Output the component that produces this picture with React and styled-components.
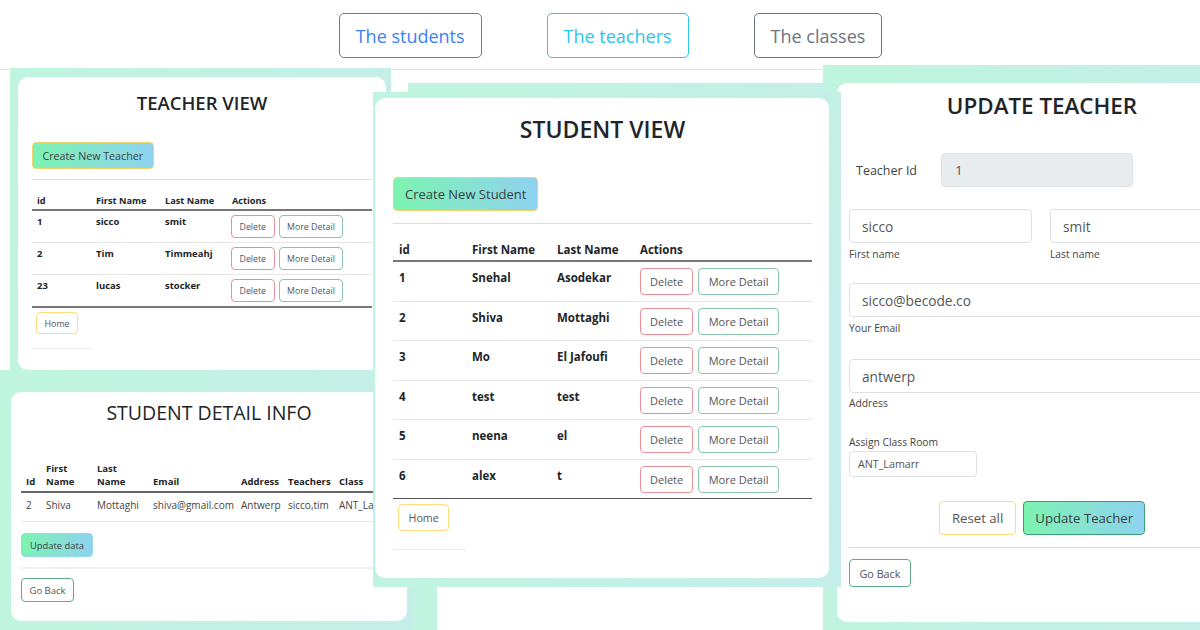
import React from 'react';
import styled, { createGlobalStyle } from 'styled-components';

const GlobalStyle = createGlobalStyle`
  html, body { margin: 0; padding: 0; background: #fff; }
  body { font-family: "Open Sans", "Noto Sans", sans-serif; color: #212529; }
  * { box-sizing: border-box; }
`;

const Page = styled.div`
  position: relative;
  width: 1200px;
  height: 630px;
  overflow: hidden;
  background: #fff;
`;

const Nav = styled.nav`
  height: 70px;
  display: flex;
  justify-content: center;
  align-items: flex-start;
  gap: 65px;
  padding: 13px 0 0 21px;
  border-bottom: 1px solid #e2e2e2;
`;

const NavButton = styled.button`
  height: 45px;
  padding: 0 16px;
  font-family: inherit;
  font-size: 18px;
  color: ${p => p.$tone};
  background: #fff;
  border: 1px solid ${p => p.$tone};
  border-radius: 5px;
`;

// every screenshot in the collage sits on its own mint backdrop
const Shot = styled.section`
  position: absolute;
  left: ${p => p.$x}px;
  top: ${p => p.$y}px;
  width: ${p => p.$w}px;
  height: ${p => p.$h}px;
  z-index: ${p => p.$z};
  padding: ${p => p.$pad};
  display: flex;
  align-items: stretch;
  background: linear-gradient(100deg, #bff5de 0%, #c5eee9 100%);
`;

const Card = styled.div`
  flex: ${p => (p.$w ? 'none' : '1')};
  width: ${p => (p.$w ? `${p.$w}px` : 'auto')};
  background: #fff;
  border-radius: 10px;
  padding: ${p => p.$pad || '0'};
  display: flex;
  flex-direction: column;
  align-items: flex-start;
`;

const Title = styled.h2`
  align-self: stretch;
  margin: ${p => p.$mt}px 0 0;
  text-align: center;
  font-size: ${p => p.$size}px;
  font-weight: ${p => p.$weight || 600};
  line-height: ${p => p.$lh}px;
  color: #212529;
`;

const Button = styled.button`
  margin-top: ${p => p.$mt || 0}px;
  margin-left: ${p => p.$ml || 0}px;
  height: ${p => p.$h}px;
  padding: 0 ${p => p.$px}px;
  font-family: inherit;
  font-size: ${p => p.$fs}px;
  color: ${p => (p.$fill ? '#3a3f44' : '#555')};
  background: ${p => (p.$fill ? 'linear-gradient(90deg, #7cf4b1 0%, #8fd2f0 100%)' : '#fff')};
  border: 1px solid ${p => p.$border};
  border-radius: 4px;
  white-space: nowrap;
  flex: none;
`;

const Rule = styled.div`
  align-self: ${p => (p.$width ? 'flex-start' : 'stretch')};
  width: ${p => (p.$width ? `${p.$width}px` : 'auto')};
  margin-top: ${p => p.$mt}px;
  border-top: ${p => p.$thick || 1}px solid ${p => p.$color || '#dedede'};
`;

const Table = styled.div`
  align-self: stretch;
  display: flex;
  flex-direction: column;
  margin-top: ${p => p.$mt || 0}px;
`;

const Row = styled.div`
  display: grid;
  grid-template-columns: ${p => p.$cols};
  height: ${p => p.$h}px;
  align-items: ${p => (p.$head ? 'end' : 'start')};
  border-bottom: ${p => p.$line};
  font-size: ${p => p.$fs}px;
  font-weight: ${p => p.$weight};
  line-height: ${p => p.$lh}px;
  color: ${p => p.$color || '#212529'};
`;

const Cell = styled.div`
  padding: ${p => p.$pad};
  white-space: nowrap;
  display: flex;
  gap: ${p => p.$gap || 0}px;
`;

const FormBody = styled.div`
  align-self: stretch;
  display: flex;
  flex-direction: column;
  align-items: flex-start;
  padding: 0 12px;
`;

const IdRow = styled.div`
  margin-top: 32px;
  display: flex;
  align-items: center;
`;

const IdLabel = styled.span`
  width: 92px;
  padding-left: 7px;
  font-size: 12.5px;
  color: #444;
`;

const Field = styled.div`
  width: ${p => (p.$w ? `${p.$w}px` : 'auto')};
  display: flex;
  flex-direction: column;
  align-self: ${p => (p.$w ? 'flex-start' : 'stretch')};
  margin-top: ${p => p.$mt || 0}px;
`;

const Input = styled.div`
  height: ${p => p.$h}px;
  margin-top: ${p => p.$mt || 0}px;
  display: flex;
  align-items: center;
  padding-left: ${p => p.$pl}px;
  font-size: ${p => p.$fs}px;
  color: #555;
  background: ${p => (p.$disabled ? '#e9ecef' : '#fff')};
  border: 1px solid #dee2e6;
  border-radius: 4px;
  width: ${p => (p.$w ? `${p.$w}px` : 'auto')};
`;

const Hint = styled.span`
  margin-top: ${p => p.$mt ?? 4}px;
  font-size: ${p => p.$fs || 10.3}px;
  line-height: 14px;
  color: #444;
`;

const NameRow = styled.div`
  align-self: stretch;
  margin-top: 22px;
  display: grid;
  grid-template-columns: 183px 1fr;
  gap: 18px;
`;

const Actions = styled.div`
  align-self: stretch;
  margin-top: 24px;
  display: flex;
  justify-content: center;
  gap: 7px;
`;

const teacherRows = [
  ['1', 'sicco', 'smit'],
  ['2', 'Tim', 'Timmeahj'],
  ['23', 'lucas', 'stocker'],
];

const studentRows = [
  ['1', 'Snehal', 'Asodekar'],
  ['2', 'Shiva', 'Mottaghi'],
  ['3', 'Mo', 'El Jafoufi'],
  ['4', 'test', 'test'],
  ['5', 'neena', 'el'],
  ['6', 'alex', 't'],
];

const RED = '#ec8e97';
const GREEN = '#8cc5a9';
const YELLOW = '#ffdc7e';

function TeacherView() {
  const cols = '59px 69px 67px 1fr';
  return (
    <Shot $x={10} $y={68} $w={381} $h={307} $z={3} $pad="9px 5px 5px 8px">
      <Card $pad="0 14px">
        <Title $mt={13} $size={18.5} $lh={26}>TEACHER VIEW</Title>
        <Button $fill $mt={26} $h={27} $px={9.5} $fs={10.7} $border="#f2d36c">Create New Teacher</Button>
        <Rule $mt={10} />
        <Table>
          <Row $head $cols={cols} $h={31} $line="2px solid #777" $fs={9.2} $weight={700} $lh={12}>
            {['id', 'First Name', 'Last Name', 'Actions'].map(h => (
              <Cell key={h} $pad="0 5px 2px">{h}</Cell>
            ))}
          </Row>
          {teacherRows.map((r, i) => (
            <Row
              key={r[0]}
              $cols={cols}
              $h={i === teacherRows.length - 1 ? 33 : 32}
              $line={i === teacherRows.length - 1 ? '2px solid #777' : '1px solid #e6e6e6'}
              $fs={9.5}
              $weight={700}
              $lh={12}
            >
              {r.map(c => (
                <Cell key={c} $pad="5px 5px 0">{c}</Cell>
              ))}
              <Cell $pad="4px 4px 0" $gap={4}>
                <Button $h={23} $px={7.5} $fs={8.8} $border={RED}>Delete</Button>
                <Button $h={23} $px={7.5} $fs={8.8} $border={GREEN}>More Detail</Button>
              </Cell>
            </Row>
          ))}
        </Table>
        <Button $mt={4} $ml={4} $h={22} $px={7.5} $fs={8.9} $border={YELLOW}>Home</Button>
        <Rule $mt={14} $width={60} $color="#ececec" />
      </Card>
    </Shot>
  );
}

function StudentView() {
  const cols = '73px 85px 83px 1fr';
  return (
    <Shot $x={373} $y={92} $w={468} $h={495} $z={5} $pad="6px 12px 9px 2px">
      <Card $pad="0 17px 0 18px">
        <Title $mt={15} $size={23} $lh={32}>STUDENT VIEW</Title>
        <Button $fill $mt={32} $h={34} $px={11} $fs={13} $border="#f2d36c">Create New Student</Button>
        <Rule $mt={12} />
        <Table>
          <Row $head $cols={cols} $h={38} $line="2px solid #777" $fs={11.5} $weight={700} $lh={15}>
            {['id', 'First Name', 'Last Name', 'Actions'].map(h => (
              <Cell key={h} $pad="0 6px 3px">{h}</Cell>
            ))}
          </Row>
          {studentRows.map((r, i) => (
            <Row
              key={r[0]}
              $cols={cols}
              $h={39.5}
              $line={i === studentRows.length - 1 ? '1px solid #555' : '1px solid #e6e6e6'}
              $fs={11.5}
              $weight={700}
              $lh={15}
            >
              {r.map(c => (
                <Cell key={c} $pad="8px 6px 0">{c}</Cell>
              ))}
              <Cell $pad="6px 6px 0" $gap={5}>
                <Button $h={27} $px={9} $fs={11} $border={RED}>Delete</Button>
                <Button $h={27} $px={9.5} $fs={11} $border={GREEN}>More Detail</Button>
              </Cell>
            </Row>
          ))}
        </Table>
        <Button $mt={5} $ml={5} $h={27} $px={9.5} $fs={10.7} $border={YELLOW}>Home</Button>
        <Rule $mt={18} $width={73} $color="#ececec" />
      </Card>
    </Shot>
  );
}

function StudentDetail() {
  const cols = '20px 51px 56px 88px 47px 51px 1fr';
  const head = [['Id'], ['First', 'Name'], ['Last', 'Name'], ['Email'], ['Address'], ['Teachers'], ['Class']];
  const row = ['2', 'Shiva', 'Mottaghi', 'shiva@gmail.com', 'Antwerp', 'sicco,tim', 'ANT_Lamarr'];
  return (
    <Shot $x={0} $y={370} $w={413} $h={260} $z={4} $pad="22px 6px 9px 11px">
      <Card $pad="0 10px">
        <Title $mt={8} $size={19.5} $weight={500} $lh={26}>STUDENT DETAIL INFO</Title>
        <Table $mt={36}>
          <Row $head $cols={cols} $h={31} $line="2px solid #666" $fs={9.5} $weight={700} $lh={13}>
            {head.map(h => (
              <Cell key={h.join()} $pad="0 0 3px 5px">
                <span>
                  {h[0]}
                  {h[1] && <br />}
                  {h[1]}
                </span>
              </Cell>
            ))}
          </Row>
          <Row $cols={cols} $h={29} $line="1px solid #e8e8e8" $fs={10} $weight={400} $lh={13} $color="#444">
            {row.map(c => (
              <Cell key={c} $pad="6px 0 0 5px">{c}</Cell>
            ))}
          </Row>
        </Table>
        <Button $fill $mt={11} $h={24} $px={8} $fs={9.4} $border="#93d8e6">Update data</Button>
        <Rule $mt={10} $thick={2} $color="#f0f0f0" />
        <Button $mt={9} $h={24} $px={7.5} $fs={9.5} $border="#5fae8a">Go Back</Button>
      </Card>
    </Shot>
  );
}

function UpdateTeacher() {
  return (
    <Shot $x={823} $y={65} $w={430} $h={565} $z={2} $pad="18px 0 8px 14px">
      <Card $w={410}>
        <Title $mt={8} $size={22.4} $lh={30}>UPDATE TEACHER</Title>
        <FormBody>
          <IdRow>
            <IdLabel>Teacher Id</IdLabel>
            <Input $disabled $w={192} $h={34} $pl={13} $fs={13.5}>1</Input>
          </IdRow>
          <NameRow>
            <Field>
              <Input $h={34} $pl={12} $fs={13.7}>sicco</Input>
              <Hint>First name</Hint>
            </Field>
            <Field>
              <Input $h={34} $pl={12} $fs={13.7}>smit</Input>
              <Hint>Last name</Hint>
            </Field>
          </NameRow>
          <Field $mt={22}>
            <Input $h={34} $pl={12} $fs={13.7}>sicco@becode.co</Input>
            <Hint>Your Email</Hint>
          </Field>
          <Field $mt={24}>
            <Input $h={34} $pl={12} $fs={13.7}>antwerp</Input>
            <Hint $mt={3}>Address</Hint>
          </Field>
          <Field $mt={25} $w={128}>
            <Hint $mt={0}>Assign Class Room</Hint>
            <Input $mt={2} $h={26} $pl={8} $fs={10.7}>ANT_Lamarr</Input>
          </Field>
          <Actions>
            <Button $h={34} $px={12} $fs={13.2} $border={YELLOW}>Reset all</Button>
            <Button $fill $h={34} $px={11} $fs={13.2} $border="#3b9f70">Update Teacher</Button>
          </Actions>
          <Rule $mt={12} $color="#d8d8d8" />
          <Button $mt={11} $h={28} $px={9.5} $fs={10.8} $border="#5fae8a">Go Back</Button>
        </FormBody>
      </Card>
    </Shot>
  );
}

function BackShot() {
  return (
    <Shot $x={408} $y={83} $w={417} $h={560} $z={1} $pad="18px 0 0 29px">
      <Card />
    </Shot>
  );
}

export default function App() {
  return (
    <Page>
      <GlobalStyle />
      <Nav>
        <NavButton $tone="#3b82f6">The students</NavButton>
        <NavButton $tone="#2cc6ea">The teachers</NavButton>
        <NavButton $tone="#6c757d">The classes</NavButton>
      </Nav>
      <BackShot />
      <UpdateTeacher />
      <TeacherView />
      <StudentDetail />
      <StudentView />
    </Page>
  );
}
